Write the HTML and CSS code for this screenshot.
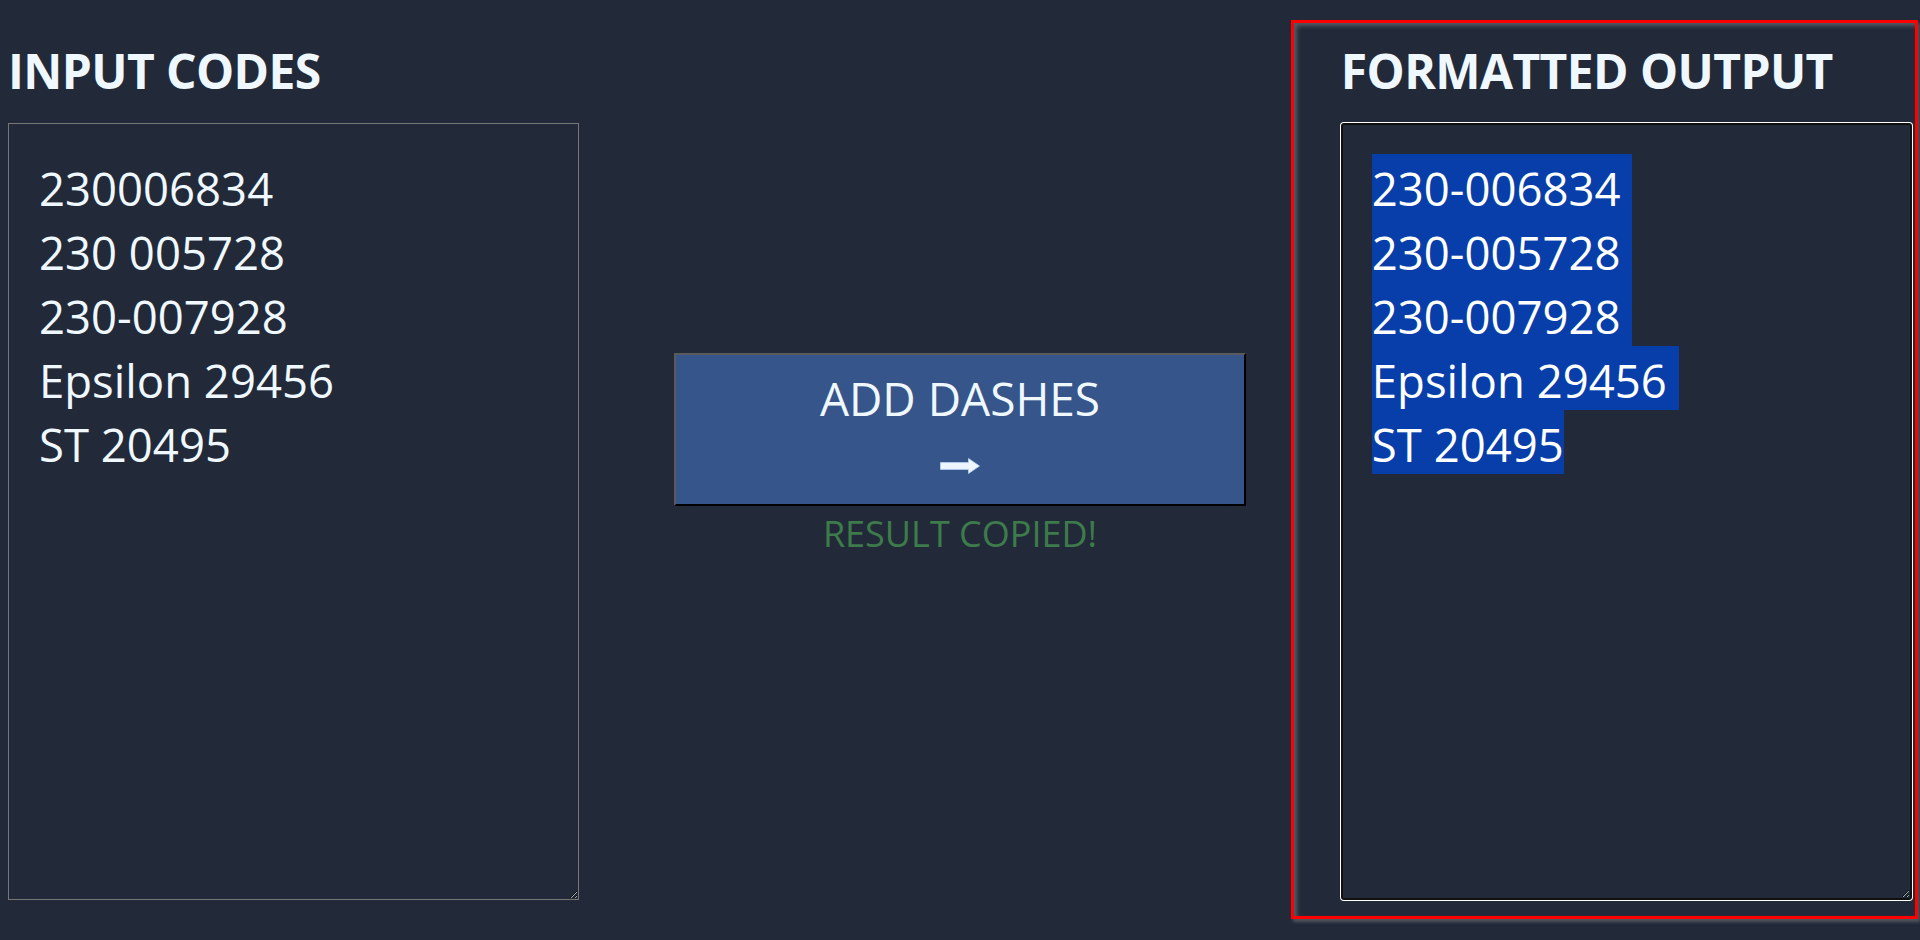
FILE: index.html
```html
<!DOCTYPE html>
<html lang="en">
<head>
<meta charset="utf-8">
<title>Add Dashes</title>
<link rel="stylesheet" href="styles.css">
</head>
<body>
<div class="page">
<main class="layout">
  <section class="column">
    <h2 class="heading">INPUT CODES</h2>
    <textarea class="codes" spellcheck="false">230006834
230 005728
230-007928
Epsilon 29456
ST 20495</textarea>
  </section>

  <section class="middle">
    <button class="convert" type="button">
      <span class="convert-label">ADD DASHES</span>
      <span class="convert-arrow">
        <svg width="40" height="16" viewBox="0 0 40 16" aria-hidden="true">
          <path d="M0.5 4.6 H28.5 V0.5 L39.5 8 L28.5 15.5 V11.4 H0.5 Z" fill="#eef6ff" stroke="#b9d6f5" stroke-width="0.8" stroke-linejoin="round"/>
        </svg>
      </span>
    </button>
    <p class="status">RESULT COPIED!</p>
  </section>

  <section class="column output-panel">
    <h2 class="heading heading-output">FORMATTED OUTPUT</h2>
    <div class="output" role="textbox" aria-readonly="true">
      <div class="line">230-006834 </div>
      <div class="line">230-005728 </div>
      <div class="line">230-007928 </div>
      <div class="line">Epsilon 29456 </div>
      <div class="line">ST 20495</div>
    </div>
  </section>
</main>
</div>
</body>
</html>
```

FILE: styles.css
```css
html, body {
  background: #222a3a;
}

body {
  margin: 0;
  min-height: 940px;
  color: #f0f8ff;
  font-family: "Open Sans", "Noto Sans", sans-serif;
}

.page {
  padding: 8px 8px 20px 8px;
}

.layout {
  display: grid;
  grid-template-columns: repeat(3, 30%);
  justify-content: space-between;
}

.column {
  display: flex;
  flex-direction: column;
}

.heading {
  margin: 31px 0 20px 0;
  font-size: 48px;
  line-height: 64px;
  font-weight: 700;
  letter-spacing: -0.6px;
  color: #f0f8ff;
}

.codes {
  box-sizing: border-box;
  display: block;
  width: 100%;
  height: 777px;
  margin: 0;
  padding: 32px 30px 28px 30px;
  border: 1px solid #767676;
  background: #222a3a;
  color: #f0f8ff;
  font-family: "Open Sans", "Noto Sans", sans-serif;
  font-size: 45.5px;
  line-height: 64px;
  resize: both;
  outline: none;
}

.middle {
  align-self: center;
  display: flex;
  flex-direction: column;
  align-items: stretch;
  margin-top: 3px;
}

.convert {
  display: flex;
  flex-direction: column;
  align-items: center;
  box-sizing: border-box;
  width: 100%;
  height: 153px;
  margin: 0;
  padding: 12px 0;
  border-width: 2px;
  border-style: solid;
  border-color: #5a5a5a #000 #000 #5a5a5a;
  background: #36558a;
  color: #f0f8ff;
  font-family: "Open Sans", "Noto Sans", sans-serif;
  font-size: 46px;
  line-height: 62px;
  cursor: pointer;
}

.convert-label {
  display: block;
  height: 62px;
}

.convert-arrow {
  display: block;
  height: 63px;
}

.convert-arrow svg {
  display: block;
  margin-top: 29px;
}

.status {
  margin: 3px 0 0 0;
  text-align: center;
  color: #3d7b4b;
  font-size: 36px;
  line-height: 49px;
}

.output-panel {
  margin: 12px -6px -19px -50px;
  padding: 0 3px 16px 47px;
  border: 3px solid #ff0000;
  box-shadow: inset 3px 3px 4px rgba(140, 140, 140, 0.5), 2px 3px 3px rgba(120, 120, 120, 0.55);
}

.heading-output {
  margin-top: 16px;
}

.output {
  box-sizing: border-box;
  width: 100%;
  height: 777px;
  padding: 29px 29px;
  border: 2px solid #101010;
  border-radius: 3px;
  box-shadow: 0 0 0 1px #ffffff;
  background: #222a3a;
  font-size: 45.5px;
  line-height: 64px;
  overflow: auto;
  resize: vertical;
}

.line {
  box-sizing: border-box;
  width: fit-content;
  height: 64px;
  padding-top: 4px;
  line-height: 60px;
  white-space: pre;
  background: #073ea9;
  color: #ffffff;
}
```
